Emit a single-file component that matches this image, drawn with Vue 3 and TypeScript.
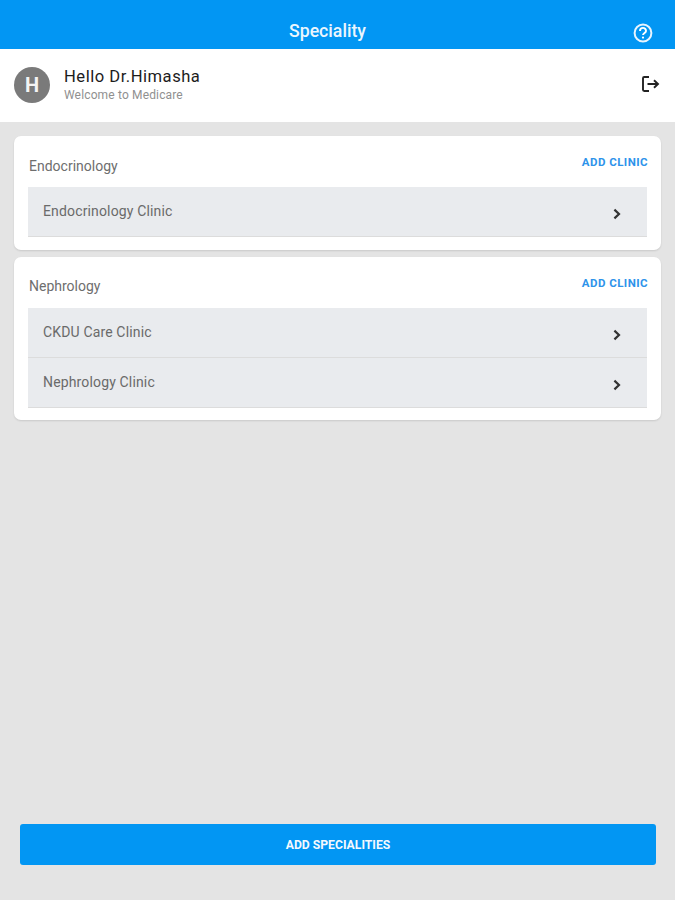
<script setup lang="ts">
interface Spec { name: string; clinics: string[] }
const specs: Spec[] = [
  { name: 'Endocrinology', clinics: ['Endocrinology Clinic'] },
  { name: 'Nephrology', clinics: ['CKDU Care Clinic', 'Nephrology Clinic'] },
]
</script>

<template>
  <div class="page">
    <header class="top">
      <span class="title">Speciality</span>
      <svg class="help" width="22" height="22" viewBox="0 0 22 22" fill="none">
        <circle cx="11" cy="11" r="8.4" stroke="#e8f4fe" stroke-width="2" />
        <path d="M8 8.9a3 3 0 0 1 6 0c0 1.9-3 2.2-3 4.2" stroke="#fff" stroke-width="1.9" fill="none" />
        <circle cx="11" cy="15.6" r="1.1" fill="#fff" />
      </svg>
    </header>
    <section class="user">
      <div class="avatar">H</div>
      <div class="who">
        <div class="hello">Hello Dr.Himasha</div>
        <div class="welcome">Welcome to Medicare</div>
      </div>
      <svg class="logout" width="20" height="18" viewBox="0 0 20 18" fill="none">
        <path d="M8 2H3.2a1.2 1.2 0 0 0-1.2 1.2v11.6A1.2 1.2 0 0 0 3.2 16H8" stroke="#222" stroke-width="1.9" />
        <path d="M6.5 9h10M13 5.2 17 9l-4 3.8" stroke="#222" stroke-width="1.9" />
      </svg>
    </section>
    <main class="list">
      <article v-for="s in specs" :key="s.name" class="card">
        <div class="card-head">
          <span class="spec">{{ s.name }}</span>
          <span class="add">ADD CLINIC</span>
        </div>
        <div v-for="c in s.clinics" :key="c" class="row">
          <span class="clinic">{{ c }}</span>
          <svg class="chev" width="10" height="12" viewBox="0 0 10 12" fill="none">
            <path d="M2.4 1.6 7 6l-4.6 4.4" stroke="#333" stroke-width="2.2" />
          </svg>
        </div>
      </article>
    </main>
    <div class="foot">
      <button class="cta" type="button">ADD SPECIALITIES</button>
    </div>
  </div>
</template>

<style>
html, body { margin: 0; padding: 0; }
</style>

<style scoped>
.page {
  width: 675px;
  height: 900px;
  display: flex;
  flex-direction: column;
  background: #e4e4e4;
  font-family: Roboto, "Liberation Sans", sans-serif;
  overflow: hidden;
}
.top {
  height: 49px;
  flex: none;
  background: #0296f3;
  display: flex;
  align-items: flex-end;
  box-sizing: border-box;
  padding: 0 0 7px 289px;
  position: relative;
}
.title {
  color: #fff;
  font-size: 17.7px;
  font-weight: 500;
  line-height: 22px;
  opacity: 0.92;
}
.help {
  position: absolute;
  left: 632px;
  top: 22px;
}
.user {
  height: 73px;
  flex: none;
  background: #fff;
  display: flex;
  align-items: center;
  box-sizing: border-box;
  padding: 0 14px;
}
.avatar {
  width: 36px;
  height: 36px;
  border-radius: 50%;
  background: #7a7a7a;
  color: #f4f4f4;
  font-size: 20px;
  font-weight: 700;
  display: flex;
  align-items: center;
  justify-content: center;
  flex: none;
  margin-top: -2px;
}
.who { margin-left: 14px; flex: 1; margin-top: -1px; }
.hello {
  font-size: 16.6px;
  line-height: 20px;
  color: #1c1c1c;
  letter-spacing: 0.5px;
}
.welcome {
  font-size: 12px;
  line-height: 16px;
  color: #909090;
  letter-spacing: 0.15px;
}
.logout { flex: none; margin: -3px 0 0; }
.list {
  padding: 14px 14px 0;
  display: flex;
  flex-direction: column;
  gap: 7px;
  flex: 1;
}
.card {
  background: #fff;
  border-radius: 7px;
  box-shadow: 0 1px 2px rgba(0, 0, 0, 0.12);
  padding: 0 14px 12.5px;
}
.card-head {
  height: 51px;
  display: flex;
  justify-content: space-between;
  align-items: flex-start;
}
.spec {
  margin: 20.6px 0 0 1px;
  font-size: 14px;
  line-height: 18px;
  color: #6e6e6e;
}
.add {
  margin: 18px 0 0;
  position: relative;
  left: 1px;
  font-size: 11.5px;
  line-height: 16px;
  font-weight: 700;
  color: #2e93ea;
  letter-spacing: 0.45px;
}
.row {
  height: 50px;
  box-sizing: border-box;
  background: #e9ebee;
  border-bottom: 1px solid #dcdcdc;
  display: flex;
  align-items: center;
  justify-content: space-between;
  padding: 0 25px 0 15px;
}
.clinic {
  font-size: 14px;
  line-height: 18px;
  color: #6a6a6a;
  margin-top: -1px;
  letter-spacing: 0.15px;
}
.chev { margin-top: 5px; }
.foot {
  flex: none;
  padding: 0 19px 35px 20px;
}
.cta {
  display: block;
  width: 100%;
  height: 41px;
  border: none;
  border-radius: 3px;
  background: #0296f3;
  color: #f4f9fe;
  font-family: inherit;
  font-size: 12.2px;
  font-weight: 700;
  padding: 0;
}
</style>
